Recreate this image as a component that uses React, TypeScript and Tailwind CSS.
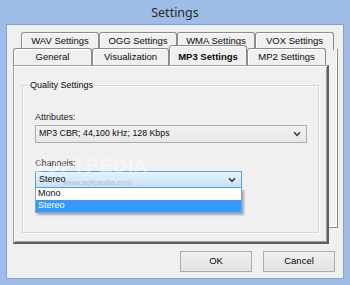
import React from "react";

const font = { fontFamily: '"Liberation Sans", Arial, sans-serif' };

function Chevron() {
  return (
    <svg width="8" height="6" viewBox="0 0 8 6" className="shrink-0">
      <path d="M1 1.2 L4 4.4 L7 1.2" fill="none" stroke="#3c3c3c" strokeWidth="1.6" />
    </svg>
  );
}

function BackTab({ label, w }: { label: string; w: number }) {
  return (
    <div
      className="h-[18px] flex items-center justify-center rounded-t-[3px] border-t border-l border-r border-[#8c8c8c] bg-[#f0f0f0] text-[9.5px] text-[#0a0a0a] shadow-[inset_1px_1px_0_#ffffff]"
      style={{ width: w }}
    >
      {label}
    </div>
  );
}

function FrontTab({ label, w, active }: { label: string; w: number; active?: boolean }) {
  if (active) {
    return (
      <div
        className="relative z-20 -mt-[2px] h-[20px] flex items-start pt-[4px] justify-center rounded-t-[3px] border-t border-l border-r border-[#8c8c8c] bg-[#f0f0f0] text-[9.5px] font-bold text-[#0a0a0a] shadow-[inset_1px_1px_0_#ffffff]"
        style={{ width: w }}
      >
        {label}
      </div>
    );
  }
  return (
    <div
      className="relative z-10 h-[17px] flex items-center justify-center rounded-t-[3px] border-t border-l border-r border-[#8c8c8c] bg-[#f0f0f0] text-[9.5px] text-[#0a0a0a] shadow-[inset_1px_1px_0_#ffffff]"
      style={{ width: w }}
    >
      {label}
    </div>
  );
}

export default function App() {
  return (
    <div className="w-[350px] h-[285px] bg-[#9dbde6] flex flex-col overflow-hidden" style={font}>
      {/* title bar */}
      <div className="h-[24px] flex items-center justify-center">
        <span
          className="text-[12.5px] text-[#2a2a2a] leading-none mt-[2px]"
          style={{ fontFamily: '"Noto Sans", "Open Sans", sans-serif' }}
        >
          Settings
        </span>
      </div>

      {/* client area */}
      <div className="ml-[6px] w-[338px] h-[255px] border border-[#86a2cb]">
        <div className="relative w-[336px] h-[253px] bg-[#f0f0f0] pt-[7px] flex flex-col">
          {/* back layer of multi-row tab control */}
          <div className="absolute left-[14px] top-[24px] w-[317px] h-[179px] border-r border-b border-[#8a8a8a] shadow-[inset_-1px_-1px_0_#ffffff]" />

          {/* back row tabs */}
          <div className="relative flex ml-[14px]">
            <BackTab label="WAV Settings" w={78} />
            <BackTab label="OGG Settings" w={78} />
            <BackTab label="WMA Settings" w={78} />
            <BackTab label="VOX Settings" w={79} />
          </div>

          {/* front row tabs */}
          <div className="relative flex ml-[6px] -mt-[2px] h-[17px] items-end">
            <FrontTab label="General" w={79} />
            <FrontTab label="Visualization" w={77} />
            <FrontTab label="MP3 Settings" w={78} active />
            <FrontTab label="MP2 Settings" w={79} />
          </div>

          {/* panel */}
          <div className="relative z-10 ml-[6px] w-[316px] h-[179px] bg-[#f0f0f0] border-l border-t border-[#a0a0a0] border-r-2 border-b-2 border-r-[#5f5f5f] border-b-[#5f5f5f] shadow-[inset_1px_1px_0_#ffffff,inset_-1px_-1px_0_#a0a0a0] pt-[19px] pl-[8px]">
            {/* group box */}
            <div className="relative w-[297px] h-[148px] border border-[#d5d5d5] shadow-[inset_1px_1px_0_#ffffff,1px_1px_0_#ffffff]">
              <div className="absolute left-[6px] -top-[7px] bg-[#f0f0f0] px-[1px] text-[9px] text-[#0a0a0a] leading-[12px]">
                Quality Settings
              </div>

              <div className="pl-[12px] pt-[25px] flex flex-col">
                <div className="text-[9px] text-[#1a1a1a] leading-[12px]">Attributes:</div>
                <div className="mt-[2px] w-[272px] h-[18px] border border-[#acacac] bg-gradient-to-b from-[#f2f2f2] to-[#e6e6e6] flex items-center justify-between pl-[3px] pr-[5px]">
                  <span className="text-[8.8px] text-[#0a0a0a]">MP3 CBR; 44,100 kHz; 128 Kbps</span>
                  <Chevron />
                </div>

                <div className="mt-[14px] text-[9px] text-[#1a1a1a] leading-[12px]">Channels:</div>
                <div className="relative mt-[2px] w-[207px]">
                  <div className="h-[17px] border border-[#5a9ee0] bg-gradient-to-b from-[#e8f3fd] to-[#c6e1fb] flex items-center justify-between pl-[3px] pr-[5px]">
                    <span className="text-[9px] text-[#0a0a0a]">Stereo</span>
                    <Chevron />
                  </div>
                  {/* dropdown list */}
                  <div className="absolute left-0 top-[17px] w-[207px] z-20 border border-t-0 border-[#7aa7d8] bg-white shadow-[2px_2px_2px_rgba(0,0,0,0.3)]">
                    <div className="h-[12px] flex items-center pl-[2px] text-[9px] text-[#0a0a0a]">Mono</div>
                    <div className="h-[12px] flex items-center pl-[2px] text-[9px] text-white bg-[#3399ff]">Stereo</div>
                  </div>
                </div>
              </div>

              {/* watermark */}
              <div className="pointer-events-none absolute left-[8px] top-[70px] z-30 text-[19px] font-bold tracking-[1px] text-white opacity-40 leading-none">
                SOFTPEDIA
              </div>
              <div className="pointer-events-none absolute left-[40px] top-[93px] z-30 text-[8px] text-[#999] opacity-50 leading-none">
                www.softpedia.com
              </div>
            </div>
          </div>

          {/* buttons */}
          <div className="flex justify-end gap-[11px] pr-[8px] mt-[7px]">
            <button className="w-[72px] h-[21px] border border-[#acacac] bg-gradient-to-b from-[#f0f0f0] to-[#e3e3e3] text-[9.5px] text-[#0a0a0a]">
              OK
            </button>
            <button className="w-[72px] h-[21px] border border-[#acacac] bg-gradient-to-b from-[#f0f0f0] to-[#e3e3e3] text-[9.5px] text-[#0a0a0a]">
              Cancel
            </button>
          </div>
        </div>
      </div>
    </div>
  );
}
